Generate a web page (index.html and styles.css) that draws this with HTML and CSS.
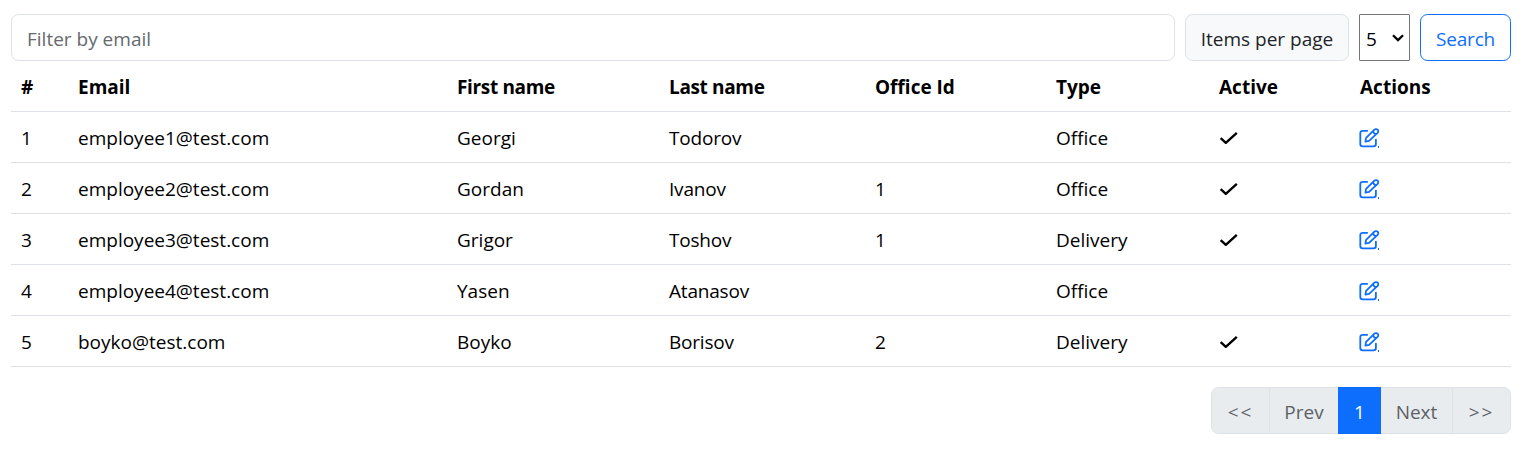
FILE: index.html
```
<!DOCTYPE html>
<html lang="en">
<head>
<meta charset="utf-8">
<title>Employees</title>
<link rel="stylesheet" href="styles.css">
</head>
<body>
<svg width="0" height="0" class="defs">
  <symbol id="check" viewBox="0 0 20 16"><path d="M1.7 8.2 6.8 12.8 17.8 2.8" fill="none" stroke="currentColor" stroke-width="2.4" stroke-linecap="butt" stroke-linejoin="round"/></symbol>
  <symbol id="edit" viewBox="0 0 21 20"><g fill="none" stroke="currentColor" stroke-width="1.8" stroke-linecap="round" stroke-linejoin="round"><path d="M8.2 2.8H3.6a2.3 2.3 0 0 0-2.3 2.3v11a2.3 2.3 0 0 0 2.3 2.3h11a2.3 2.3 0 0 0 2.3-2.3v-4.5"/><path d="M6.4 13.6 7.1 9.9 15.4 1.7a2.2 2.2 0 0 1 3.2 3.2L10.1 12.9ZM14.3 2.8c-.2 1.8 1.2 3.3 3 3.2"/></g></symbol>
</svg>
<main class="page">
  <form class="toolbar">
    <input class="filter" type="text" placeholder="Filter by email">
    <span class="label"><span>Items per page</span></span>
    <span class="select"><span>5</span><svg width="12" height="8" viewBox="0 0 12 8"><path d="M1 1.2 6 6.1 11 1.2" fill="none" stroke="#000" stroke-width="2.3"/></svg></span>
    <button class="search" type="button">Search</button>
  </form>
  <table class="employees">
    <colgroup><col class="c-num"><col class="c-email"><col class="c-first"><col class="c-last"><col class="c-office"><col class="c-type"><col class="c-active"><col></colgroup>
    <thead><tr><th>#</th><th>Email</th><th class="tight">First name</th><th class="tight">Last name</th><th>Office Id</th><th>Type</th><th>Active</th><th>Actions</th></tr></thead>
    <tbody>
      <tr><td>1</td><td>employee1@test.com</td><td>Georgi</td><td>Todorov</td><td></td><td>Office</td><td><svg class="check"><use href="#check"/></svg></td><td><a class="edit"><svg><use href="#edit"/></svg></a></td></tr>
      <tr><td>2</td><td>employee2@test.com</td><td>Gordan</td><td>Ivanov</td><td>1</td><td>Office</td><td><svg class="check"><use href="#check"/></svg></td><td><a class="edit"><svg><use href="#edit"/></svg></a></td></tr>
      <tr><td>3</td><td>employee3@test.com</td><td>Grigor</td><td>Toshov</td><td>1</td><td>Delivery</td><td><svg class="check"><use href="#check"/></svg></td><td><a class="edit"><svg><use href="#edit"/></svg></a></td></tr>
      <tr><td>4</td><td>employee4@test.com</td><td>Yasen</td><td>Atanasov</td><td></td><td>Office</td><td></td><td><a class="edit"><svg><use href="#edit"/></svg></a></td></tr>
      <tr><td>5</td><td>boyko@test.com</td><td>Boyko</td><td>Borisov</td><td>2</td><td>Delivery</td><td><svg class="check"><use href="#check"/></svg></td><td><a class="edit"><svg><use href="#edit"/></svg></a></td></tr>
    </tbody>
  </table>
  <nav class="pager">
    <span class="first">&lt;&lt;</span><span class="prev">Prev</span><span class="current">1</span><span class="next">Next</span><span class="last">&gt;&gt;</span>
  </nav>
</main>
</body>
</html>
```
FILE: styles.css
```
* { box-sizing: border-box; }
body { margin: 0; background: #fff; color: #000; font: 19px/30px "Open Sans", "Noto Sans", sans-serif; }
.defs { display: block; }
.page { padding: 14px 24px 0 11px; }
.toolbar { display: flex; gap: 10px; height: 47px; margin: 0; }
.filter { flex: 1; min-width: 0; padding: 2px 15px 0; border: 1px solid #dee2e6; border-radius: 7.5px; font: inherit; background: #fff; }
.filter::placeholder { color: #65696d; opacity: 1; }
.label { width: 164px; display: flex; justify-content: center; align-items: center; padding-top: 2px; white-space: nowrap; border: 1px solid #dee2e6; border-radius: 7.5px; background: #f8f9fa; color: #212529; }
.select { width: 51px; display: flex; align-items: center; justify-content: space-between; padding: 2px 5px 0 6px; border: 1px solid #767676; border-radius: 1px; }
.select svg { margin-top: -1px; }
.search { width: 91px; padding: 2px 0 0; border: 1px solid #0d6efd; border-radius: 7.5px; background: #fff; color: #0d6efd; font: inherit; letter-spacing: -0.2px; }
.employees { width: 100%; table-layout: fixed; border-collapse: separate; border-spacing: 0; }
.employees th, .employees td { height: 51px; padding: 2px 10px 0; text-align: left; vertical-align: middle; border-bottom: 1px solid #dee2e6; white-space: nowrap; }
.employees th { font-weight: 700; }
.employees .tight { letter-spacing: -0.35px; }
.employees td:nth-child(4) { letter-spacing: -0.2px; }
.c-num { width: 57px; } .c-email { width: 379px; } .c-first { width: 212px; } .c-last { width: 206px; }
.c-office { width: 181px; } .c-type { width: 163px; } .c-active { width: 141px; }
.check { display: block; width: 20px; height: 16px; }
.edit { display: block; width: 20px; height: 20px; margin-left: -1px; color: #0d6efd; background: linear-gradient(#0d6efd, #0d6efd) right bottom / 1px 2px no-repeat; }
.edit svg { display: block; width: 21px; height: 20px; overflow: visible; }
.pager { display: flex; width: 300px; height: 47px; margin: 20px 0 0 auto; border: 1px solid #dee2e6; border-radius: 7.5px; background: #e9ecef; color: #5d6166; }
.pager span { display: flex; align-items: center; justify-content: center; padding-top: 2px; }
.pager .first { width: 58px; border-right: 1px solid #dee2e6; letter-spacing: 2px; }
.pager .prev { width: 68px; }
.pager .current { width: 43px; margin: -1px 0; background: #0d6efd; color: #fff; }
.pager .next { width: 72px; border-right: 1px solid #dee2e6; }
.pager .last { flex: 1; letter-spacing: 2px; }
```
